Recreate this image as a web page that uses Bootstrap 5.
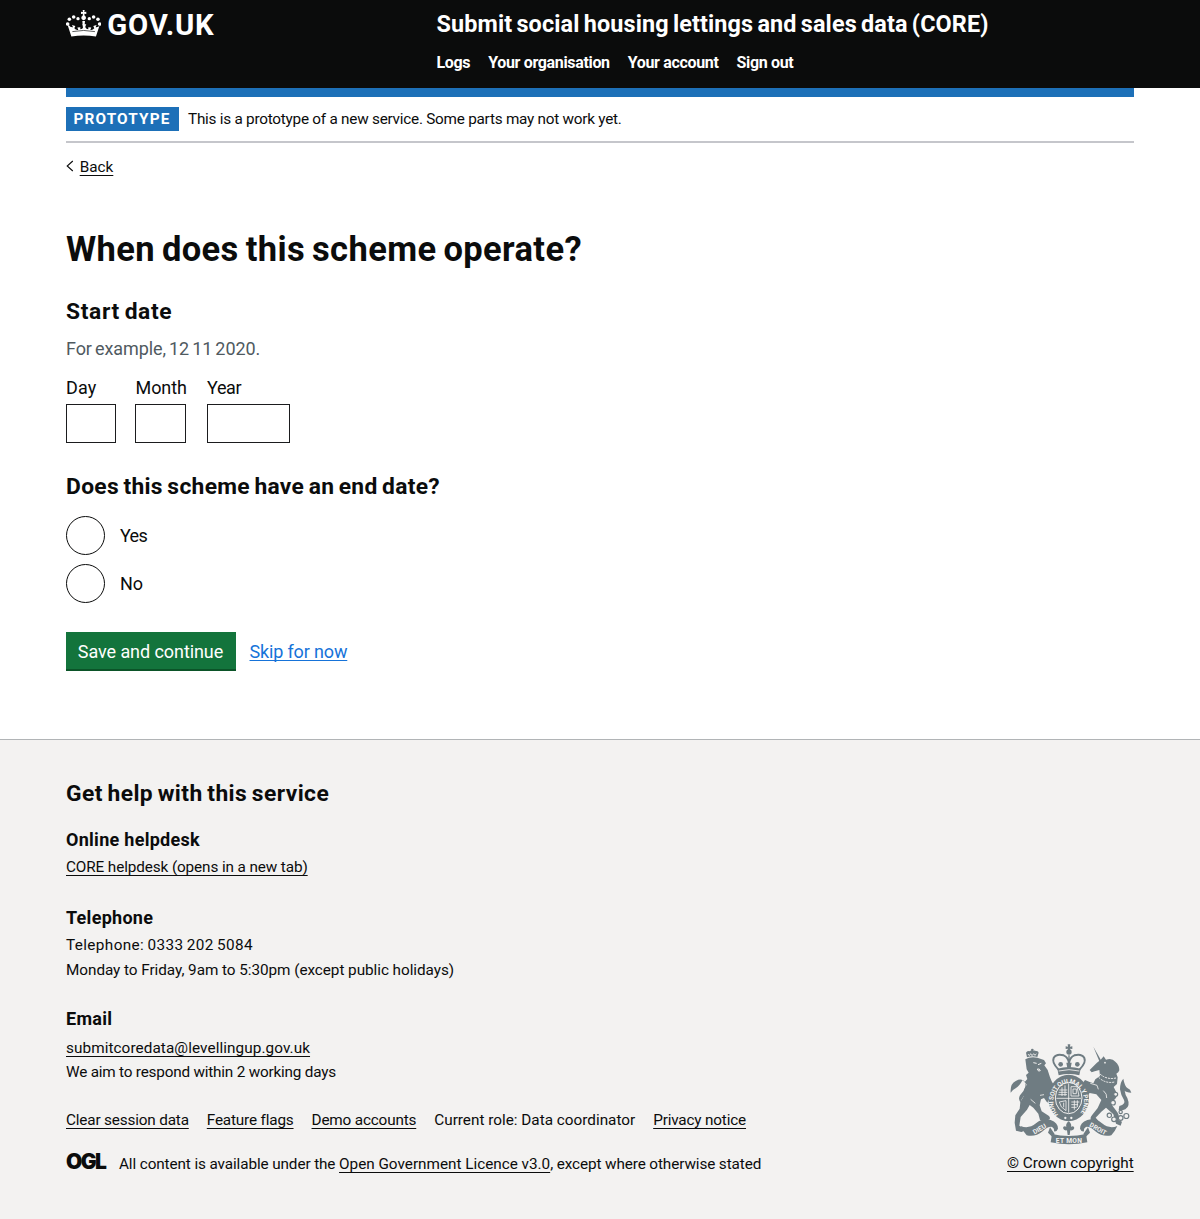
<!DOCTYPE html>
<html lang="en">
<head>
<meta charset="utf-8">
<meta name="viewport" content="width=device-width, initial-scale=1">
<title>When does this scheme operate?</title>
<link href="https://cdn.jsdelivr.net/npm/bootstrap@5.3.0/dist/css/bootstrap.min.css" rel="stylesheet">
<style>
  body { font-family: Roboto, Arial, sans-serif; font-size: 15.3px; line-height: 24px; color: #0b0c0c; background: #fff; min-height: 1219px; }
  .page-width { width: 1068px; margin: 0 auto; }
  .nowrap-all, .nowrap-all * { white-space: nowrap; }
  h1, h2, h3, p { margin: 0; }
  a.ink { color: #0b0c0c; text-decoration-line: underline; text-decoration-thickness: 1px; text-underline-offset: 3px; text-decoration-skip-ink: none; }

  .site-header { background: #0b0c0c; height: 88px; color: #fff; }
  .brand-col { width: 370.5px; padding-top: 10.3px; }
  .brand-crown { width: 35.3px; height: 26.6px; margin-right: 6px; }
  .brand-name { font-size: 29.3px; line-height: 30px; font-weight: 700; letter-spacing: .82px; margin-top: -.6px; }
  .service-name { font-size: 23.4px; line-height: 28px; font-weight: 700; letter-spacing: .12px; word-spacing: -1.7px; padding-top: 10.4px; }
  .service-nav { gap: 18px; margin-top: 15.1px; font-size: 16px; line-height: 20px; font-weight: 700; letter-spacing: -.34px; }
  .service-nav a { color: #fff; text-decoration: none; }
  .blue-bar { height: 9px; background: #1d70b8; }

  .phase { height: 45.5px; border-bottom: 2px solid #c5c6cb; padding-top: 10px; }
  .phase-tag { background: #1d70b8; color: #fff; width: 112.5px; height: 24px; font-size: 15.3px; line-height: 24px; font-weight: 700; letter-spacing: 1.15px; padding-left: 7.5px; margin-right: 9.5px; }
  .phase-text { letter-spacing: -.24px; line-height: 24px; }
  .back-row { margin-top: 12.5px; height: 24px; }
  .back-row svg { width: 8px; height: 12px; margin: 5px 5.7px 0 0; }

  .title-xl { font-size: 34.5px; line-height: 40px; font-weight: 700; letter-spacing: .38px; word-spacing: -2px; margin-top: 50px; }
  .title-m { font-size: 22.8px; line-height: 28px; font-weight: 700; word-spacing: -1.5px; padding-top: .8px; margin-bottom: -.8px; }
  .title-start { margin-top: 28px; letter-spacing: .65px; }
  .hint { font-size: 18px; line-height: 24px; color: #505a5f; letter-spacing: -.08px; word-spacing: -1.3px; margin-top: 11.8px; }
  .date-row { margin-top: 15px; font-size: 18px; }
  .date-row label { display: block; line-height: 24px; margin-bottom: 4.4px; }
  .date-box { display: block; height: 39px; border: 1.5px solid #1b1c1e; border-radius: 0; padding: 0; background: #fff; }
  .d-day { width: 69px; } .d-day input { width: 50px; } .d-day label { letter-spacing: .2px; }
  .d-month { width: 72px; } .d-month input { width: 51px; } .d-month label { letter-spacing: -.1px; padding-left: .6px; }
  .d-year input { width: 83px; } .d-year label { letter-spacing: -.35px; }
  .title-end { margin-top: 29px; margin-bottom: 15.2px; letter-spacing: .31px; }
  .radio-row { height: 39px; margin-bottom: 9px; font-size: 18px; }
  .radio-row input { appearance: none; width: 39px; height: 39px; border: 1.5px solid #0b0c0c; border-radius: 50%; margin: 0 15px 0 0; background: #fff; }
  .r-yes { letter-spacing: -.7px; }
  .actions { margin-top: 29px; }
  .btn-save { width: 170px; height: 39px; background: #13743c; color: #fff; border: 0; border-radius: 0; border-bottom: 2px solid #0b5428; padding: 2px 1px 0 0; font-size: 18px; line-height: 34px; letter-spacing: -.07px; }
  .skip { color: #1673d9; font-size: 18px; margin: 0 0 0 13.5px; letter-spacing: -.15px; text-decoration-thickness: 1px; text-underline-offset: 2px; text-decoration-skip-ink: none; }

  .site-footer { background: #f3f2f1; border-top: 1px solid #b1b4b6; margin-top: 68px; height: 480px; padding-top: 39.3px; }
  .site-footer h2 { letter-spacing: .43px; }
  .site-footer h3 { font-size: 18px; line-height: 24px; font-weight: 700; letter-spacing: .28px; }
  .f-help { margin-top: 21.8px; } .f-tel { margin-top: 26.6px; } .f-mail { margin-top: 25.2px; }
  .site-footer h2 + .f-help { margin-top: 21px; }
  .f-help-link { letter-spacing: -.11px; margin-top: 3px !important; }
  .f-tel-1 { letter-spacing: .38px; word-spacing: -.8px; margin-top: 3px !important; }
  .f-tel-2 { letter-spacing: -.05px; margin-top: .5px !important; }
  .f-mail-1 { letter-spacing: .08px; margin-top: 4.8px !important; }
  .f-mail-2 { letter-spacing: -.2px; margin-top: .4px !important; }
  .f-links { gap: 18px; margin-top: 23.8px; letter-spacing: -.17px; }
  .f-role { letter-spacing: 0; }
  .f-licence { margin-top: 20px; letter-spacing: -.11px; }
  .f-licence a { letter-spacing: -.01px; }
  .ogl { font: 900 21px/24px Inter, sans-serif; letter-spacing: -1.6px; width: 53px; margin-top: -2px; }
  .crest-col { padding-top: 264.7px; width: 127px; }
  .crest-col svg { width: 122px; height: 101px; margin-left: 3px; }
  .crest-col a { display: block; margin-top: 6.3px; }
</style>
</head>
<body class="nowrap-all">

<header class="site-header">
  <div class="page-width d-flex">
    <div class="brand-col d-flex">
      <svg class="brand-crown" viewBox="17 15 106 80" fill="#fff" aria-hidden="true">
        <circle cx="22" cy="57" r="5.4"/><circle cx="27" cy="43" r="5.4"/><circle cx="40" cy="36" r="5.4"/><circle cx="53" cy="41" r="5"/>
        <circle cx="118" cy="57" r="5.4"/><circle cx="113" cy="43" r="5.4"/><circle cx="100" cy="36" r="5.4"/><circle cx="87" cy="41" r="5"/>
        <path d="M67 15h6l-1 6 6-1v7l-6-1 1 6q5 2 4 8-1 5-7 6-6-1-7-6-1-6 4-8l1-6-6 1v-7l6 1z"/>
        <path d="M22 61l11 34q37-6 74 0l11-34q-3 7-12 6l3-7-10 3 3 7q-5 7-12 5l3-7-9-1v6q-8 0-9-8l3-7h-12l3 7q-1 8-9 8v-6l-9 1 3 7q-7 2-12-5l3-7-10-3 3 7q-9 1-12-6z"/>
        <path d="M36 80q34-7 68 0" fill="none" stroke="#0b0c0c" stroke-width="2"/>
        <path d="M66 48h8l-2 22h-4z"/>
      </svg>
      <span class="brand-name">GOV.UK</span>
    </div>
    <div>
      <div class="service-name">Submit social housing lettings and sales data (CORE)</div>
      <nav class="service-nav d-flex"><a href="#">Logs</a><a href="#">Your organisation</a><a href="#">Your account</a><a href="#">Sign out</a></nav>
    </div>
  </div>
</header>

<main class="page-width">
  <div class="blue-bar"></div>
  <div class="phase d-flex"><strong class="phase-tag">PROTOTYPE</strong><span class="phase-text">This is a prototype of a new service. Some parts may not work yet.</span></div>
  <div class="back-row d-flex">
    <svg viewBox="0 0 8 12" fill="none" stroke="#0b0c0c" stroke-width="1.1"><path d="M6.8 1L1.2 6l5.6 5"/></svg>
    <a class="ink" href="#">Back</a>
  </div>

  <h1 class="title-xl">When does this scheme operate?</h1>
  <h2 class="title-m title-start">Start date</h2>
  <p class="hint">For example, 12 11 2020.</p>
  <div class="date-row d-flex">
    <div class="d-day"><label for="day">Day</label><input class="date-box" id="day" type="text"></div>
    <div class="d-month"><label for="month">Month</label><input class="date-box" id="month" type="text"></div>
    <div class="d-year"><label for="year">Year</label><input class="date-box" id="year" type="text"></div>
  </div>

  <h2 class="title-m title-end">Does this scheme have an end date?</h2>
  <div class="radio-row d-flex align-items-center"><input type="radio" name="end" id="yes"><label class="r-yes" for="yes">Yes</label></div>
  <div class="radio-row d-flex align-items-center"><input type="radio" name="end" id="no"><label for="no">No</label></div>

  <div class="actions d-flex align-items-center">
    <button class="btn btn-save" type="button">Save and continue</button>
    <a class="skip" href="#">Skip for now</a>
  </div>
</main>

<footer class="site-footer">
  <div class="page-width d-flex justify-content-between">
    <div>
      <h2 class="title-m">Get help with this service</h2>
      <h3 class="f-help">Online helpdesk</h3>
      <p class="f-help-link"><a class="ink" href="#">CORE helpdesk (opens in a new tab)</a></p>
      <h3 class="f-tel">Telephone</h3>
      <p class="f-tel-1">Telephone: 0333 202 5084</p>
      <p class="f-tel-2">Monday to Friday, 9am to 5:30pm (except public holidays)</p>
      <h3 class="f-mail">Email</h3>
      <p class="f-mail-1"><a class="ink" href="#">submitcoredata@levellingup.gov.uk</a></p>
      <p class="f-mail-2">We aim to respond within 2 working days</p>
      <div class="f-links d-flex"><a class="ink" href="#">Clear session data</a><a class="ink" href="#">Feature flags</a><a class="ink" href="#">Demo accounts</a><span class="f-role">Current role: Data coordinator</span><a class="ink" href="#">Privacy notice</a></div>
      <div class="f-licence d-flex"><span class="ogl">OGL</span><span>All content is available under the <a class="ink" href="#">Open Government Licence v3.0</a>, except where otherwise stated</span></div>
    </div>
    <div class="crest-col">
      <svg class="d-block" viewBox="60 42 366 303" fill="#6f7c82" aria-hidden="true">
        <!-- lion -->
        <path d="M111 82l-3-14q4-7 10-4 6-4 10-1 5-3 10 0 7-1 8 5l-4 13q-15-5-31 1z"/>
        <circle cx="127" cy="60" r="4"/><path d="M114 72l4 5 4-6 4 6 5-6 4 5 4-5" fill="none" stroke="#f3f2f1" stroke-width="2.5"/>
        <path d="M106 88q14-9 36-5l20 7 6 10-5 6 10 14 7 22 5 12 6 10 8 10-1 14-4 10-8 9-8-1-6 12-10-14-9 4-4 18 6 18 22 14q8 10-5 13l-22-1-5-19-15-18-11-8-8 14-19 22-4 26 13 8q4 9-7 11l-16-4-4-24 2-22 13-20 2-19 10-18 1-19 8-16-6-8 8-9-4-12 8-7-6-10z"/>
        <path d="M96 222q-14-12-6-26 12-12 16-26 2-16-8-20-10 18-20 24-10 5-16 14 -2-26 14-34 14-10 24-2 14 12 8 34-6 12-12 20-4 6 2 12z"/>
        <path d="M130 98l10 2M144 104l10-4M142 117q7-2 9 5-6 5-9-5" fill="none" stroke="#f3f2f1" stroke-width="3"/>
        <path d="M150 196l12-2M122 208l14 12" stroke="#f3f2f1" stroke-width="2.5"/>
        <!-- unicorn -->
        <path d="M310 50l24 42-5 4z"/>
        <path d="M320 99l12-10 9-10 7 10q18-6 28 6 12 10 12 26-2 7-9 10l4 11-2 20-10 9 8 16q4 16-6 22l-9 14 18 24q8 12 2 22l12 6-4 12-14-6-8-28-22-20-14 12-17 18 12 14q0 9-12 7l-14-12q-4-10 4-18l16-20 11-24-15-17-20-4-10 12q-8 2-8-8l4-8-18-12-2-12 14-3 6-8 14 6 11 4 6-12 14-10-2-18-14 4-9 3-6-7z"/>
        <path d="M330 132q20 18 48 12M326 142q20 20 48 14" fill="none" stroke="#f3f2f1" stroke-width="3" stroke-dasharray="6 3"/>
        <circle cx="345" cy="98" r="2.5" fill="#f3f2f1"/>
        <path d="M301 160l20 6 4 12M340 182q12 10 10 22" fill="none" stroke="#f3f2f1" stroke-width="2.5"/>
        <path d="M388 228q20-6 14-18-10-16-12-32 0-22 10-32 4 22 12 28 10 4 12 14-16-2-20-6 2 14 8 22 10 24-6 34-10 4-20 2z"/>
        <g fill="#f3f2f1" stroke="#6f7c82" stroke-width="3.5"><circle cx="377" cy="193" r="6"/><circle cx="369" cy="218" r="7"/><circle cx="358" cy="256" r="6.5"/><circle cx="372" cy="268" r="7"/><circle cx="392" cy="264" r="7"/><circle cx="409" cy="258" r="7.5"/><circle cx="392" cy="246" r="5"/></g>
        <!-- garter and shield -->
        <ellipse cx="236" cy="204" rx="61" ry="70"/>
        <ellipse cx="236" cy="204" rx="40" ry="47" fill="none" stroke="#f3f2f1" stroke-width="3"/>
        <path id="garter" d="M205 254A46 54 0 1 1 267 254" fill="none"/>
        <text fill="#f3f2f1" font-family="Roboto" font-weight="700" font-size="19" letter-spacing="-.6"><textPath href="#garter">HONI SOIT QUI MAL Y PENSE</textPath></text>
        <path d="M236 160v88M199 205h74M208 180h24M206 187h26M205 194h26M244 216h24M244 224h20M244 232h16M216 172v26M225 166v32M253 211v28M262 211v20" stroke="#f3f2f1" stroke-width="2.5" fill="none"/>
        <path d="M243 170h18l6 28h-24zM249 177v14h10v-14zM228 212l-20 4q2 16 20 26zM221 218v14" fill="none" stroke="#f3f2f1" stroke-width="2.5"/>
        <circle cx="226" cy="264" r="3.5" fill="#f3f2f1"/><circle cx="244" cy="264" r="3.5" fill="#f3f2f1"/>
        <!-- crown over the shield -->
        <g fill="none" stroke="#6f7c82" stroke-width="6">
          <path d="M205 118q-20-20-14-34 8-14 30-8 14 6 16 24 2-18 16-24 22-6 30 8 6 14-14 34"/>
          <path d="M237 76v40" stroke-width="4"/>
        </g>
        <path d="M202 116q35-10 70 0l-4 20q-31-8-62 0z"/>
        <path d="M206 123q31-8 62 0" fill="none" stroke="#f3f2f1" stroke-width="2.5"/>
        <circle cx="237" cy="66" r="8"/><path d="M233 43h8l-1 7 7-1v8l-7-1 1 8h-8l1-8-7 1v-8l7 1z"/>
        <circle cx="212" cy="103" r="7"/><circle cx="262" cy="103" r="7"/><path d="M229 98h16l-3 16h-10z"/>
        <!-- motto ribbon -->
        <path d="M92 288q24 10 46-8 20-18 44-10 22 8 22 26-4 10-12 8 2-10-8-14-14 0-26 14-22 18-48 12-10-10-18-28z"/>
        <path d="M382 288q-24 10-46-8-20-18-44-10-22 8-22 26 4 10 12 8-2-10 8-14 14 0 26 14 22 18 48 12 10-10 18-28z"/>
        <path d="M186 312q50 12 102 0l4 25q-55 12-110 0z"/>
        <path d="M180 292l14 20-6 10-14-14zM294 292l-14 20 6 10 14-14z"/>
        <path d="M236 274q10 8 7 16 9-4 10 4-2 9-12 7l-2 14h-6l-2-14q-10 2-12-7 1-8 10-4-3-8 7-16z"/>
        <g fill="#f3f2f1" font-family="Roboto" font-weight="700" font-size="20" text-anchor="middle"><text transform="translate(152 303) rotate(-30)">DIEU</text><text x="237" y="338" letter-spacing="1">ET MON</text><text transform="translate(321 302) rotate(30)" font-size="19">DROIT</text></g>
      </svg>
      <a class="ink" href="#">© Crown copyright</a>
    </div>
  </div>
</footer>

<script src="https://cdn.jsdelivr.net/npm/bootstrap@5.3.0/dist/js/bootstrap.bundle.min.js"></script>
</body>
</html>
